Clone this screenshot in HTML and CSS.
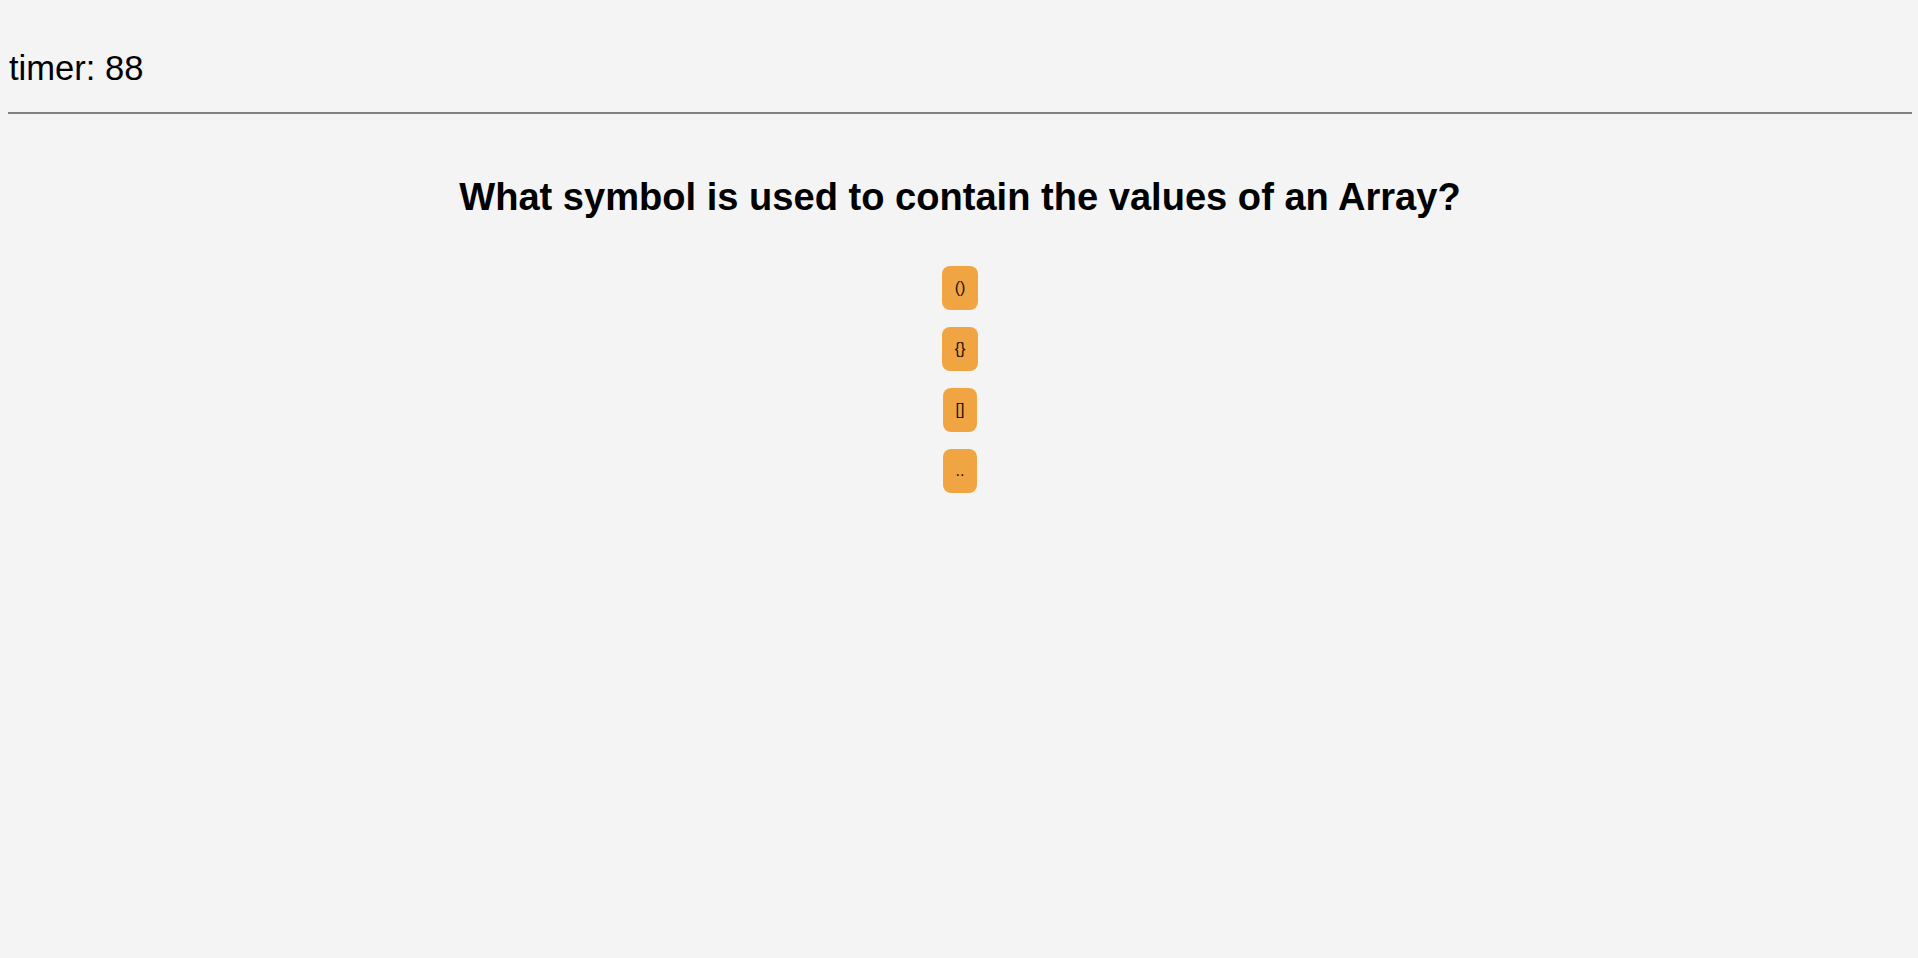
FILE: index.html
```html
<!DOCTYPE html>
<html>
<head>
<meta charset="utf-8">
<link rel="stylesheet" href="styles.css">
</head>
<body>
<header class="top">
  <div class="timer">timer: 88</div>
</header>
<main class="quiz">
  <h2 class="question">What symbol is used to contain the values of an Array?</h2>
  <div class="choices">
    <button class="choice">()</button>
    <button class="choice">{}</button>
    <button class="choice">[]</button>
    <button class="choice">..</button>
  </div>
</main>
</body>
</html>
```
FILE: styles.css
```css
html, body {
  background: #f4f4f4;
}
body {
  margin: 8px 6px 0 8px;
  font-family: "Liberation Sans", Arial, sans-serif;
  color: #000;
}
.top {
  padding: 41px 0 24px 1px;
  border-bottom: 2px solid #808080;
}
.timer {
  font-size: 34.6px;
  line-height: 39px;
}
.quiz {
  display: flex;
  flex-direction: column;
  align-items: center;
}
.question {
  margin: 62px 0 0 0;
  font-size: 38.1px;
  line-height: 43px;
  font-weight: bold;
  text-align: center;
}
.choices {
  margin-top: 47px;
  display: flex;
  flex-direction: column;
  align-items: center;
  gap: 17px;
}
.choice {
  background: #f0a542;
  border: none;
  border-radius: 8px;
  padding: 13px 13px;
  font-family: "Liberation Sans", Arial, sans-serif;
  font-size: 16px;
  line-height: 18px;
  color: #111;
}
```
